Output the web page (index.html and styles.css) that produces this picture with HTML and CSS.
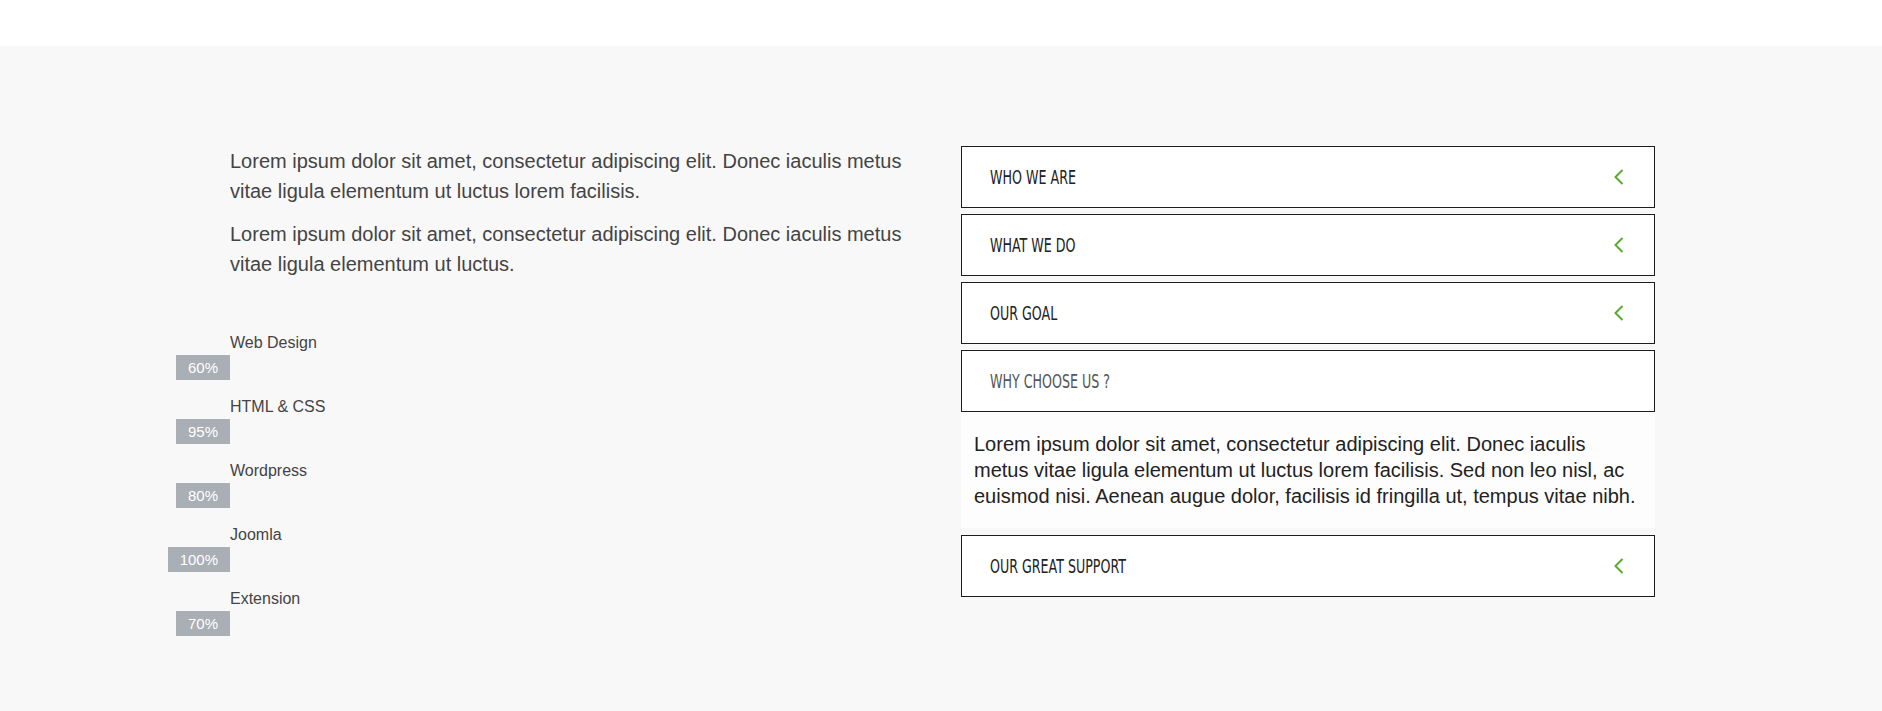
FILE: index.html
```html
<!DOCTYPE html>
<html lang="en">
<head>
<meta charset="utf-8">
<title>About</title>
<link rel="stylesheet" href="styles.css">
</head>
<body>
<header class="topbar"></header>
<section class="about">
  <div class="col-left">
    <p class="intro">Lorem ipsum dolor sit amet, consectetur adipiscing elit. Donec iaculis metus vitae ligula elementum ut luctus lorem facilisis.</p>
    <p class="intro">Lorem ipsum dolor sit amet, consectetur adipiscing elit. Donec iaculis metus vitae ligula elementum ut luctus.</p>
    <ul class="skills">
      <li class="skill"><span class="skill-name">Web Design</span><span class="skill-bar">60%</span></li>
      <li class="skill"><span class="skill-name">HTML &amp; CSS</span><span class="skill-bar">95%</span></li>
      <li class="skill"><span class="skill-name">Wordpress</span><span class="skill-bar">80%</span></li>
      <li class="skill"><span class="skill-name">Joomla</span><span class="skill-bar">100%</span></li>
      <li class="skill"><span class="skill-name">Extension</span><span class="skill-bar">70%</span></li>
    </ul>
  </div>
  <div class="accordion">
    <div class="acc-item"><span class="acc-title">Who we are</span><svg class="chev" width="10" height="16" viewBox="0 0 10 16"><polyline points="8.5,1 1.5,8 8.5,15" fill="none" stroke="#5aad2c" stroke-width="2"/></svg></div>
    <div class="acc-item"><span class="acc-title">What we do</span><svg class="chev" width="10" height="16" viewBox="0 0 10 16"><polyline points="8.5,1 1.5,8 8.5,15" fill="none" stroke="#5aad2c" stroke-width="2"/></svg></div>
    <div class="acc-item"><span class="acc-title">Our goal</span><svg class="chev" width="10" height="16" viewBox="0 0 10 16"><polyline points="8.5,1 1.5,8 8.5,15" fill="none" stroke="#5aad2c" stroke-width="2"/></svg></div>
    <div class="acc-item acc-open"><span class="acc-title">Why choose us ?</span></div>
    <div class="acc-body">Lorem ipsum dolor sit amet, consectetur adipiscing elit. Donec iaculis metus vitae ligula elementum ut luctus lorem facilisis. Sed non leo nisl, ac euismod nisi. Aenean augue dolor, facilisis id fringilla ut, tempus vitae nibh.</div>
    <div class="acc-item"><span class="acc-title">Our great support</span><svg class="chev" width="10" height="16" viewBox="0 0 10 16"><polyline points="8.5,1 1.5,8 8.5,15" fill="none" stroke="#5aad2c" stroke-width="2"/></svg></div>
  </div>
</section>
</body>
</html>
```
FILE: styles.css
```css
* { box-sizing: border-box; }
html, body { margin: 0; padding: 0; }
body {
  background: #f8f8f8;
  font-family: "Liberation Sans", Arial, sans-serif;
  color: #444;
  min-height: 711px;
}
.topbar {
  height: 46px;
  background: #ffffff;
}
.about {
  display: flex;
  gap: 30px;
  padding: 100px 0 60px 160px;
}
.col-left {
  flex: 0 0 771px;
}
.intro {
  margin: 0 0 13px;
  padding-left: 70px;
  font-size: 20px;
  line-height: 30px;
  color: #444;
}
.skills {
  list-style: none;
  margin: 54px 0 0;
  padding: 0;
}
.skill {
  display: grid;
  grid-template-columns: 70px 1fr;
  grid-template-rows: 20px 25px;
  row-gap: 2px;
  margin-bottom: 17px;
}
.skill-name {
  grid-column: 2;
  grid-row: 1;
  font-size: 16px;
  line-height: 20px;
  color: #444;
}
.skill-bar {
  grid-column: 1;
  grid-row: 2;
  justify-self: end;
  background: #aaaeb5;
  color: #fff;
  font-size: 15px;
  line-height: 25px;
  padding: 0 12px;
}
.accordion {
  flex: 0 0 694px;
  display: flex;
  flex-direction: column;
}
.acc-item {
  height: 62px;
  border: 1px solid #1c1c1c;
  background: #fff;
  display: flex;
  align-items: center;
  justify-content: space-between;
  padding: 0 30px 0 28px;
  margin-bottom: 6px;
}
.acc-title {
  display: inline-block;
  font-family: "DejaVu Sans Condensed", "DejaVu Sans", sans-serif;
  font-stretch: condensed;
  text-transform: uppercase;
  font-size: 19px;
  color: #222;
  transform: scaleX(0.74);
  transform-origin: left center;
}
.acc-open { margin-bottom: 0; }
.acc-open .acc-title { color: #555; }
.acc-body {
  background: #fdfdfd;
  padding: 19px 19px 19px 13px;
  margin-bottom: 7px;
  font-size: 20px;
  line-height: 26px;
  color: #222;
}
.chev { display: block; }
```
